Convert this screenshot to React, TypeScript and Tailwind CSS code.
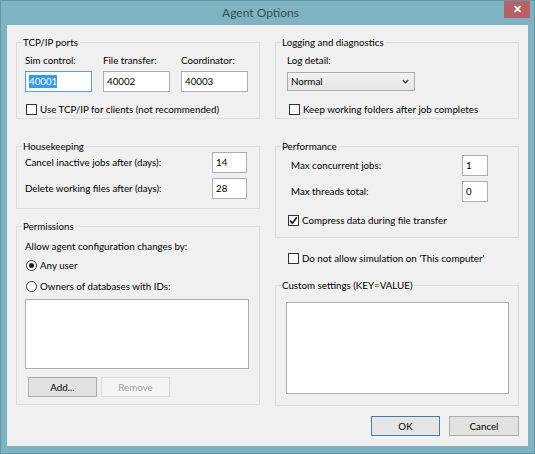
import React from 'react';

// ------------------------------
// SMALL CONTROLS
// ------------------------------
const CheckBox: React.FC<{ checked?: boolean }> = ({ checked }) => (
  <span className="w-[11px] h-[11px] border border-[#333333] bg-white flex items-center justify-center shrink-0">
    {checked && (
      <svg width="9" height="9" viewBox="0 0 9 9">
        <path d="M1.2 4.6 L3.4 7.2 L7.8 1.2" fill="none" stroke="#1a1a1a" strokeWidth="1.7" />
      </svg>
    )}
  </span>
);

const Radio: React.FC<{ checked?: boolean }> = ({ checked }) => (
  <span className="w-[11px] h-[11px] rounded-full border border-[#333333] bg-white flex items-center justify-center shrink-0">
    {checked && <span className="w-[5px] h-[5px] rounded-full bg-[#1a1a1a]" />}
  </span>
);

const TextBox: React.FC<{ value?: string; className?: string; selected?: boolean }> = ({ value, className, selected }) => (
  <div
    className={`h-[21px] bg-white border ${selected ? 'border-[#569de5]' : 'border-[#abadb3]'} pl-[3px] flex items-center ${className ?? ''}`}
  >
    {selected ? (
      <span className="bg-[#3399ff] text-white leading-[13px]">{value}</span>
    ) : (
      <span className="leading-[13px]">{value}</span>
    )}
  </div>
);

const WinButton: React.FC<{ label: string; className?: string; disabled?: boolean; primary?: boolean }> = ({
  label,
  className,
  disabled,
  primary,
}) => (
  <div
    className={`h-[20px] flex items-center justify-center border ${
      disabled
        ? 'bg-[#f4f4f4] border-[#d9d9d9] text-[#a0a0a0]'
        : primary
        ? 'bg-[#e5e5e5] border-[#3c7fb1] text-black'
        : 'bg-[#e1e1e1] border-[#adadad] text-black'
    } ${className ?? ''}`}
  >
    {label}
  </div>
);

const GroupBox: React.FC<{ title: string; className?: string; children?: React.ReactNode }> = ({
  title,
  className,
  children,
}) => (
  <fieldset className={`border border-[#dcdcdc] ${className ?? ''}`}>
    <legend className="ml-[5px] px-[1px] leading-[16px]">{title}</legend>
    {children}
  </fieldset>
);

const CheckRow: React.FC<{ label: string; checked?: boolean; className?: string }> = ({ label, checked, className }) => (
  <div className={`flex items-center gap-[3px] leading-[16px] ${className ?? ''}`}>
    <CheckBox checked={checked} />
    <span>{label}</span>
  </div>
);

const RadioRow: React.FC<{ label: string; checked?: boolean; className?: string }> = ({ label, checked, className }) => (
  <div className={`flex items-center gap-[3px] leading-[16px] ${className ?? ''}`}>
    <Radio checked={checked} />
    <span>{label}</span>
  </div>
);

// ------------------------------
// DIALOG
// ------------------------------
const ports = [
  { label: 'Sim control:', value: '40001', selected: true },
  { label: 'File transfer:', value: '40002' },
  { label: 'Coordinator:', value: '40003' },
];

export default function App() {
  return (
    <div className="w-[535px] h-[454px] bg-[#7eb4c1] border border-[#6297a4] flex flex-col font-['Segoe_UI','Lato',sans-serif] text-[9.75px] text-black">
      {/* title bar */}
      <div className="h-[24px] flex shrink-0">
        <div className="flex-1 pl-[16px] flex items-center justify-center text-[12px] text-[#3b4a55]">Agent Options</div>
        <div className="w-[26px] h-[17px] mr-[4px] bg-[#b95f66] flex items-center justify-center text-white text-[11px] font-bold">
          ✕
        </div>
      </div>

      {/* client area */}
      <div className="mx-[6px] h-[421px] bg-[#f0f0f0] flex flex-col">
        <div className="grid grid-cols-[244px_244px] gap-x-[15px] pl-[9px] pt-[9px]">
          {/* left column */}
          <div className="flex flex-col">
            <GroupBox title="TCP/IP ports" className="h-[85px]">
              <div className="flex gap-[11px] pl-[8px] mt-[2px]">
                {ports.map((p) => (
                  <div key={p.label} className="w-[67px] flex flex-col">
                    <span className="leading-[16px]">{p.label}</span>
                    <TextBox className="mt-[3px] w-[67px]" value={p.value} selected={p.selected} />
                  </div>
                ))}
              </div>
              <CheckRow className="pl-[9px] mt-[9px]" label="Use TCP/IP for clients (not recommended)" />
            </GroupBox>

            <GroupBox title="Housekeeping" className="h-[71px] mt-[19px]">
              <div className="flex items-center justify-between h-[21px] pl-[8px] pr-[12px] -mt-[2px]">
                <span>Cancel inactive jobs after (days):</span>
                <TextBox className="w-[35px]" value="14" />
              </div>
              <div className="flex items-center justify-between h-[21px] pl-[8px] pr-[12px] mt-[5px]">
                <span>Delete working files after (days):</span>
                <TextBox className="w-[35px]" value="28" />
              </div>
            </GroupBox>

            <GroupBox title="Permissions" className="h-[187px] mt-[9px]">
              <div className="pl-[8px] mt-[4px] leading-[16px]">Allow agent configuration changes by:</div>
              <RadioRow className="pl-[9px] mt-[3px]" label="Any user" checked />
              <RadioRow className="pl-[9px] mt-[5px]" label="Owners of databases with IDs:" />
              <div className="ml-[8px] mt-[5px] w-[224px] h-[70px] bg-white border border-[#abadb3]" />
              <div className="flex gap-[4px] ml-[11px] mt-[8px]">
                <WinButton label="Add..." className="w-[69px]" />
                <WinButton label="Remove" className="w-[69px]" disabled />
              </div>
            </GroupBox>
          </div>

          {/* right column */}
          <div className="flex flex-col">
            <GroupBox title="Logging and diagnostics" className="h-[85px]">
              <div className="pl-[11px] mt-[2px] leading-[16px]">Log detail:</div>
              <div className="ml-[11px] mt-[4px] w-[128px] h-[19px] border border-[#acacac] bg-gradient-to-b from-[#f2f2f2] to-[#e5e5e5] flex items-center justify-between pl-[3px] pr-[5px]">
                <span>Normal</span>
                <svg width="7" height="5" viewBox="0 0 7 5">
                  <path d="M0.8 1 L3.5 3.8 L6.2 1" fill="none" stroke="#333333" strokeWidth="1.2" />
                </svg>
              </div>
              <CheckRow className="pl-[13px] mt-[10px]" label="Keep working folders after job completes" />
            </GroupBox>

            <GroupBox title="Performance" className="h-[100px] mt-[19px]">
              <div className="flex items-center justify-between h-[21px] pl-[15px] pr-[30px] mt-[1px]">
                <span>Max concurrent jobs:</span>
                <TextBox className="w-[26px]" value="1" />
              </div>
              <div className="flex items-center justify-between h-[21px] pl-[15px] pr-[30px] mt-[5px]">
                <span>Max threads total:</span>
                <TextBox className="w-[26px]" value="0" />
              </div>
              <CheckRow className="pl-[12px] mt-[10px]" label="Compress data during file transfer" checked />
            </GroupBox>

            <CheckRow className="pl-[13px] mt-[12px]" label="Do not allow simulation on 'This computer'" />

            <GroupBox title="Custom settings (KEY=VALUE)" className="h-[129px] mt-[11px]">
              <div className="ml-[10px] mt-[9px] w-[223px] h-[92px] bg-white border border-[#abadb3]" />
            </GroupBox>
          </div>
        </div>

        {/* dialog buttons */}
        <div className="flex justify-end gap-[9px] pr-[9px] mt-[10px]">
          <WinButton label="OK" className="w-[69px]" primary />
          <WinButton label="Cancel" className="w-[70px]" />
        </div>
      </div>
    </div>
  );
}
